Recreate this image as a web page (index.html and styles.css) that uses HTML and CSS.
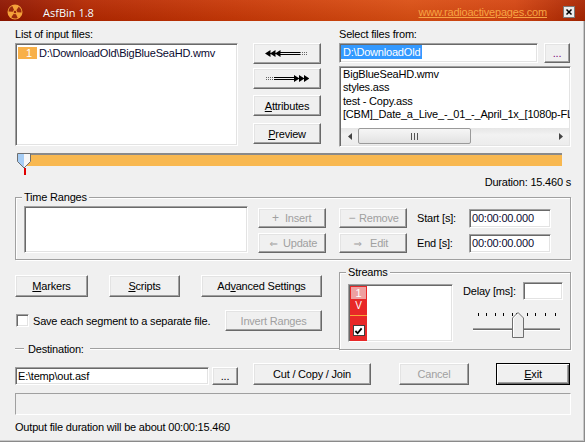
FILE: index.html
```html
<!DOCTYPE html>
<html>
<head>
<meta charset="utf-8">
<title>AsfBin 1.8</title>
<link rel="stylesheet" href="styles.css">
</head>
<body>
<div class="window">
  <div class="titlebar">
    <svg class="appicon" width="16" height="16" viewBox="0 0 16 16">
      <circle cx="8" cy="8" r="7.5" fill="#f4a23a"/>
      <g fill="#9a2a0c" transform="rotate(-25 8 8)">
        <path d="M13.63 4.75A6.5 6.5 0 0 1 13.63 11.25L9.91 9.1A2.2 2.2 0 0 0 9.91 6.9Z"/>
        <path d="M13.63 4.75A6.5 6.5 0 0 1 13.63 11.25L9.91 9.1A2.2 2.2 0 0 0 9.91 6.9Z" transform="rotate(120 8 8)"/>
        <path d="M13.63 4.75A6.5 6.5 0 0 1 13.63 11.25L9.91 9.1A2.2 2.2 0 0 0 9.91 6.9Z" transform="rotate(240 8 8)"/>
        <circle cx="8" cy="8" r="1.3"/>
      </g>
    </svg>
    <span class="title">AsfBin 1.8</span>
    <span class="site">www.radioactivepages.com</span>
    <span class="close">
      <svg width="12" height="12" viewBox="0 0 12 12"><path d="M3 3L9 9M9 3L3 9" stroke="#000" stroke-width="1.8"/></svg>
    </span>
  </div>

  <div class="main">
    <div class="top">
      <div class="col-input">
        <div class="label">List of input files:</div>
        <div class="sunken inputlist">
          <div class="inrow"><span class="num">1</span><span class="intext">D:\DownloadOld\BigBlueSeaHD.wmv</span></div>
        </div>
      </div>

      <div class="col-buttons">
        <button class="btn b1">
          <svg width="44" height="9" viewBox="0 0 44 9">
            <path d="M0 4.5L5.5 1V8Z M5 4.5L10.5 1V8Z M10 4.5L15.5 1V8Z" fill="#000"/>
            <rect x="15" y="3" width="20" height="1" fill="#000"/>
            <rect x="15" y="5" width="20" height="1" fill="#000"/>
            <path d="M35 3.5h8M35 5.5h8" stroke="#666" stroke-dasharray="1 1"/>
          </svg>
        </button>
        <button class="btn b2">
          <svg width="44" height="9" viewBox="0 0 44 9">
            <path d="M1 3.5h8M1 5.5h8" stroke="#666" stroke-dasharray="1 1"/>
            <rect x="9" y="3" width="20" height="1" fill="#000"/>
            <rect x="9" y="5" width="20" height="1" fill="#000"/>
            <path d="M34.5 4.5L29 1V8Z M39.5 4.5L34 1V8Z M44.5 4.5L39 1V8Z" fill="#000"/>
          </svg>
        </button>
        <button class="btn b3"><u>A</u>ttributes</button>
        <button class="btn b4"><u>P</u>review</button>
      </div>

      <div class="col-select">
        <div class="label">Select files from:</div>
        <div class="selrow">
          <div class="sunken selfield"><span class="hl">D:\DownloadOld</span></div>
          <button class="btn dots purple">...</button>
        </div>
        <div class="sunken filelist">
          <div class="files">
            <div>BigBlueSeaHD.wmv</div>
            <div>styles.ass</div>
            <div>test - Copy.ass</div>
            <div>[CBM]_Date_a_Live_-_01_-_April_1x_[1080p-FLAC][5E9F0F1C].mkv</div>
          </div>
          <div class="hscroll">
            <span class="sarrow"><svg width="4" height="7" viewBox="0 0 4 7"><path d="M4 0L0 3.5L4 7Z" fill="#444"/></svg></span>
            <span class="strack">
              <span class="sthumb"><svg width="7" height="7" viewBox="0 0 7 7"><path d="M0.5 0v7M3.5 0v7M6.5 0v7" stroke="#555"/></svg></span>
            </span>
            <span class="sarrow"><svg width="4" height="7" viewBox="0 0 4 7"><path d="M0 0L4 3.5L0 7Z" fill="#444"/></svg></span>
          </div>
        </div>
      </div>
    </div>

    <div class="timeline">
      <div class="track"></div>
      <svg class="tthumb" width="14" height="16" viewBox="0 0 14 16">
        <polygon points="0.5,0.5 7,0.5 7,15 0.5,8.5" fill="#a6cdf5"/>
        <polygon points="7,0.5 13.5,0.5 13.5,8.5 7,15" fill="#f6f6f6"/>
        <polygon points="0.5,0.5 13.5,0.5 13.5,8.5 7,15 0.5,8.5" fill="none" stroke="#6f6f6f"/>
      </svg>
      <span class="ttick"></span>
    </div>
    <div class="duration">Duration: 15.460 s</div>

    <div class="group timegroup">
      <span class="legend">Time Ranges</span>
      <div class="sunken rangelist"></div>
      <div class="rbcol first">
        <button class="btn dis ibtn"><span class="ico i-ins">+</span><span>Insert</span></button>
        <button class="btn dis ibtn"><span class="ico i-upd">⇐</span><span>Update</span></button>
      </div>
      <div class="rbcol second">
        <button class="btn dis ibtn"><span class="ico i-rem">−</span><span>Remove</span></button>
        <button class="btn dis ibtn"><span class="ico i-edt">⇒</span><span>Edit</span></button>
      </div>
      <div class="lblcol">
        <div>Start [s]:</div>
        <div>End [s]:</div>
      </div>
      <div class="inpcol">
        <div class="sunken tfield">00:00:00.000</div>
        <div class="sunken tfield">00:00:00.000</div>
      </div>
    </div>

    <div class="bottom">
      <div class="left">
        <div class="btnrow">
          <button class="btn markers"><u>M</u>arkers</button>
          <button class="btn scripts"><u>S</u>cripts</button>
          <button class="btn adv">Ad<u>v</u>anced Settings</button>
        </div>
        <div class="checkrow">
          <span class="sunken chk"></span>
          <span class="chklabel">Save each segment to a separate file.</span>
          <button class="btn dis invert">Invert Ranges</button>
        </div>
        <div class="destline">
          <span class="etch short"></span>
          <span class="dlabel">Destination:</span>
          <span class="etch long"></span>
        </div>
      </div>

      <div class="group streams">
        <span class="legend">Streams</span>
        <div class="sunken streamlist">
          <div class="redcol">
            <span class="snum">1</span>
            <span class="sv">V</span>
            <span class="sline"></span>
            <span class="scheck"><svg width="10" height="9" viewBox="0 0 10 9"><path d="M1.5 4.5L4 7L8.5 1.5" fill="none" stroke="#000" stroke-width="2"/></svg></span>
          </div>
        </div>
        <div class="delay">
          <div class="delayrow">
            <span>Delay [ms]:</span>
            <span class="sunken delayin"></span>
          </div>
          <svg class="slider" width="90" height="26" viewBox="0 0 90 26">
            <g fill="#000">
              <rect x="6" y="1" width="1" height="3"/>
              <rect x="14" y="1" width="1" height="3"/>
              <rect x="23" y="1" width="1" height="3"/>
              <rect x="31" y="1" width="1" height="3"/>
              <rect x="40" y="1" width="1" height="3"/>
              <rect x="44" y="1" width="2" height="3"/>
              <rect x="55" y="1" width="1" height="3"/>
              <rect x="63" y="1" width="1" height="3"/>
              <rect x="73" y="1" width="1" height="3"/>
              <rect x="83" y="1" width="1" height="3"/>
            </g>
            <rect x="1" y="16" width="87" height="1" fill="#a0a0a0"/>
            <rect x="1" y="17" width="87" height="1" fill="#696969"/>
            <rect x="1" y="18" width="87" height="1" fill="#ffffff"/>
            <polygon points="40.5,6 46,0.5 51.5,6 51.5,25.5 40.5,25.5" fill="#ececec" stroke="#6f6f6f"/>
            <path d="M41.5 25V6.4L46 1.9" fill="none" stroke="#fff"/>
          </svg>
        </div>
      </div>
    </div>

    <div class="destrow">
      <div class="sunken destin">E:\temp\out.asf</div>
      <button class="btn dots2">...</button>
      <button class="btn cut">Cut / Copy / Join</button>
      <button class="btn dis cancel">Cancel</button>
      <button class="btn exit"><u>E</u>xit</button>
    </div>
    <div class="progress"></div>
    <div class="status">Output file duration will be about 00:00:15.460</div>
  </div>
</div>
</body>
</html>
```

FILE: styles.css
```css
* { box-sizing: border-box; }
html, body { margin: 0; padding: 0; }
body {
  width: 585px;
  height: 442px;
  overflow: hidden;
  font-family: "Liberation Sans", Arial, sans-serif;
  font-size: 11px;
  letter-spacing: -0.2px;
  color: #000;
  background: #f0f0f0;
}
.window {
  width: 585px;
  height: 442px;
  background: #f0f0f0;
  box-shadow: inset -1px -1px 0 #8a8a8a, inset -2px -2px 0 #c8c8c8;
}

/* title bar */
.titlebar {
  height: 21px;
  display: flex;
  align-items: center;
  padding: 3px 0 0 7px;
  background:
    linear-gradient(180deg, rgba(255,255,255,0.06), rgba(0,0,0,0.06)),
    linear-gradient(90deg, #8e1500 0%, #b42800 15%, #c83806 40%, #da4e12 70%, #d44410 88%, #a82400 100%);
}
.appicon { display: block; }
.title {
  margin-left: 20px;
  color: #fff;
  font-family: "Open Sans", "Liberation Sans", sans-serif;
  font-size: 11px;
  letter-spacing: 0;
  text-shadow: 0 0 1px rgba(80,0,0,0.6);
}
.site {
  margin-left: auto;
  color: #f7a444;
  text-decoration: underline;
  font-size: 11px;
}
.close {
  margin-left: 16px;
  margin-right: 10px;
  width: 12px;
  height: 12px;
  background: #ececec;
  border: 1px solid #7a7a7a;
  display: flex;
  align-items: center;
  justify-content: center;
}
.close svg { display: block; width: 10px; height: 10px; }

/* common widgets */
.main { padding: 7px 0 0 15px; }
.sunken {
  background: #fff;
  border: 1px solid;
  border-color: #a0a0a0 #fff #fff #a0a0a0;
  box-shadow: inset 1px 1px 0 #696969, inset -1px -1px 0 #e3e3e3;
}
.btn {
  font: inherit;
  letter-spacing: inherit;
  color: #000;
  padding: 0;
  margin: 0;
  background: #f0f0f0;
  border: 1px solid;
  border-color: #fff #696969 #696969 #fff;
  box-shadow: inset -1px -1px 0 #a0a0a0, inset 1px 1px 0 #e3e3e3;
  display: flex;
  align-items: center;
  justify-content: center;
}
.btn svg { display: block; }
.dis { color: #a0a0a0; }
.label { height: 15px; line-height: 13px; }
.group {
  position: relative;
  border: 1px solid #a0a0a0;
  box-shadow: inset 1px 1px 0 #fff, 1px 1px 0 #fff;
}
.legend {
  position: absolute;
  top: -7px;
  left: 6px;
  padding: 0 2px;
  line-height: 13px;
  background: #f0f0f0;
}

/* top row */
.top { display: flex; align-items: flex-start; }
.col-input { width: 223px; }
.inputlist { height: 103px; padding: 3px 0 0 2px; }
.inrow { display: flex; height: 12px; line-height: 12px; }
.num { width: 19px; background: #f8b048; color: #fff; padding-left: 8px; }
.intext { margin-left: 2px; color: #0a0a30; }

.col-buttons {
  width: 68px;
  margin-left: 15px;
  padding-top: 15px;
  display: flex;
  flex-direction: column;
}
.col-buttons .btn { height: 21px; }
.b2 { margin-top: 4px; }
.b3 { margin-top: 6px; }
.b4 { margin-top: 7px; }

.col-select { width: 232px; margin-left: 18px; }
.selrow { display: flex; height: 20px; margin-bottom: 3px; }
.selfield { width: 199px; height: 20px; padding: 1px 0 0 1px; }
.hl {
  display: inline-block;
  background: #3399ff;
  color: #fff;
  padding: 0 2px;
  line-height: 14px;
  height: 14px;
}
.dots { width: 26px; height: 20px; margin-left: 6px; }
.purple { color: #7a0a7a; }
.filelist { height: 81px; display: flex; flex-direction: column; }
.files {
  flex: 1;
  padding: 1px 0 0 3px;
  overflow: hidden;
  white-space: nowrap;
  line-height: 13.3px;
}
.hscroll {
  height: 17px;
  margin: 0 1px 1px 1px;
  display: flex;
  background: linear-gradient(180deg, #e6e6e6, #f2f2f2 40%, #ececec);
}
.sarrow { width: 17px; display: flex; align-items: center; justify-content: center; }
.sarrow svg { display: block; }
.strack { flex: 1; display: flex; }
.sthumb {
  width: 113px;
  height: 16px;
  border: 1px solid #9a9a9a;
  border-radius: 2px;
  background: linear-gradient(180deg, #f6f6f6, #e2e2e2);
  display: flex;
  align-items: center;
  justify-content: center;
}
.sthumb svg { display: block; }

/* timeline */
.timeline { position: relative; height: 23px; margin-top: 5px; width: 556px; }
.track {
  margin-left: 9px;
  margin-top: 6px;
  width: 538px;
  height: 13px;
  background: #f8b850;
  border-top: 2px solid #8a8a8a;
}
.tthumb { position: absolute; left: 2px; top: 0; display: block; }
.ttick { position: absolute; left: 9px; top: 15px; width: 2px; height: 7px; background: #e00000; }
.duration { width: 556px; text-align: right; line-height: 13px; height: 13px; }

/* time ranges */
.timegroup {
  margin-top: 8px;
  width: 556px;
  height: 63px;
  display: flex;
  align-items: flex-start;
  padding: 8px 0 0 8px;
}
.rangelist { width: 224px; height: 47px; }
.rbcol { width: 68px; display: flex; flex-direction: column; gap: 5px; padding-top: 2px; }
.rbcol.first { margin-left: 10px; }
.rbcol.second { margin-left: 13px; }
.ibtn { height: 20px; justify-content: flex-start; padding-left: 5px; }
.ico { display: inline-block; font-family: "DejaVu Sans", sans-serif; font-size: 10px; }
.i-ins { width: 21px; padding-left: 2px; font-family: "Liberation Sans", sans-serif; font-size: 12px; }
.i-upd { width: 19px; }
.i-rem { width: 14px; font-family: "Liberation Sans", sans-serif; font-size: 12px; }
.i-edt { width: 25px; }
.lblcol { width: 52px; margin-left: 10px; padding-top: 2px; display: flex; flex-direction: column; gap: 5px; }
.lblcol div { height: 20px; line-height: 20px; }
.inpcol { width: 82px; padding-top: 3px; display: flex; flex-direction: column; gap: 6px; }
.tfield { height: 19px; line-height: 17px; padding-left: 2px; color: #0a0a30; }

/* bottom */
.bottom { display: flex; align-items: flex-start; }
.left { width: 324px; padding-top: 15px; }
.btnrow { display: flex; height: 22px; }
.btnrow .btn { height: 22px; }
.markers { width: 73px; }
.scripts { width: 71px; margin-left: 21px; }
.adv { width: 121px; margin-left: 21px; }
.checkrow { display: flex; align-items: center; margin-top: 13px; height: 21px; width: 307px; }
.chk { width: 13px; height: 13px; margin-left: 1px; }
.chklabel { margin-left: 4px; }
.invert { margin-left: auto; width: 97px; height: 21px; }
.destline { display: flex; align-items: center; margin-top: 11px; height: 14px; }
.etch { height: 2px; border-top: 1px solid #a0a0a0; border-bottom: 1px solid #fff; }
.etch.short { width: 9px; }
.etch.long { flex: 1; }
.dlabel { margin: 0 6px 0 4px; }

.streams {
  margin-top: 12px;
  width: 232px;
  height: 78px;
  display: flex;
  align-items: flex-start;
  padding: 11px 0 0 8px;
}
.streamlist { width: 105px; height: 58px; padding: 1px 0 0 1px; }
.redcol {
  width: 17px;
  height: 55px;
  background: #e82828;
  display: flex;
  flex-direction: column;
  align-items: center;
}
.snum {
  width: 15px;
  height: 12px;
  margin-top: 1px;
  background: #eea0a0;
  color: #fff;
  text-align: center;
  line-height: 12px;
}
.sv { color: #fff; line-height: 12px; margin-top: 1px; font-size: 10px; }
.sline { width: 17px; height: 1px; background: #f8a838; margin-top: 3px; }
.scheck {
  width: 12px;
  height: 11px;
  margin-top: 9px;
  background: #fff;
  border: 1px solid #404040;
  display: flex;
  align-items: center;
  justify-content: center;
}
.scheck svg { display: block; width: 9px; height: 8px; }
.delay { width: 100px; margin-left: 10px; margin-top: -2px; }
.delayrow { display: flex; align-items: center; height: 18px; }
.delayin { width: 40px; height: 18px; margin-left: auto; }
.slider { display: block; margin-top: 12px; margin-left: 9px; }

/* destination row */
.destrow { display: flex; align-items: flex-end; margin-top: 7px; height: 22px; }
.destin { width: 194px; height: 18px; line-height: 16px; padding-left: 2px; }
.dots2 { width: 26px; height: 18px; margin-left: 3px; align-items: flex-end; padding-bottom: 2px; }
.cut { width: 118px; height: 22px; margin-left: 15px; }
.cancel { width: 70px; height: 22px; margin-left: 28px; }
.exit {
  width: 74px;
  height: 22px;
  margin-left: 27px;
  border: 1px solid #000;
  box-shadow: inset 1px 1px 0 #fff, inset -1px -1px 0 #696969, inset -2px -2px 0 #a0a0a0;
}
.progress {
  margin-top: 8px;
  width: 556px;
  height: 22px;
  border: 1px solid;
  border-color: #a0a0a0 #fff #fff #a0a0a0;
  background: #f0f0f0;
}
.status { margin-top: 6px; line-height: 13px; height: 13px; }
```
